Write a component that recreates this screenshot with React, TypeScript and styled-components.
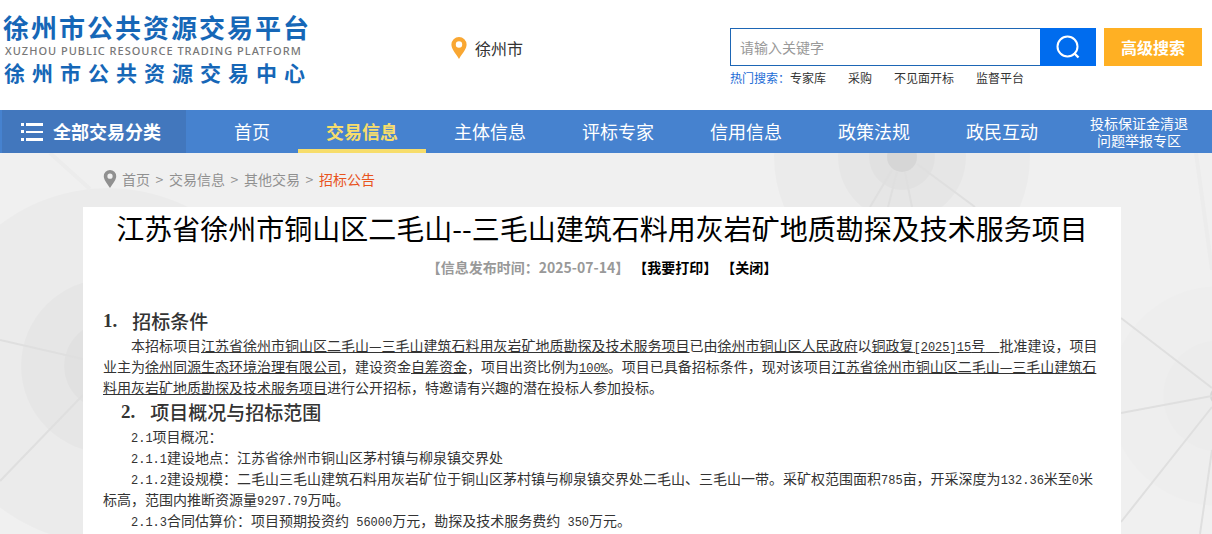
import React from "react";
import styled, { createGlobalStyle } from "styled-components";

const sans = `"Noto Sans CJK SC", "Noto Sans", sans-serif`;

const GlobalStyle = createGlobalStyle`
  * { box-sizing: border-box; }
  html, body { margin: 0; padding: 0; }
  body { background: #fff; color: #333; font-family: ${sans}; font-size: 14px; }
  a { color: inherit; text-decoration: none; }
  button { font-family: inherit; border: 0; padding: 0; cursor: pointer; }
  h1, h2, p, ul, ol { margin: 0; padding: 0; font-weight: 400; }
  ul, ol { list-style: none; }
`;

const Page = styled.div`
  display: flex;
  flex-direction: column;
  min-height: 100vh;
`;

const Header = styled.header`
  display: flex;
  flex: none;
  height: 110px;
  padding: 12px 10px 0 3px;
`;

const Logo = styled.a`
  display: block;
  width: 448px;
  color: #1667b7;
  font-weight: 700;
  white-space: nowrap;
`;

const LogoName = styled.span`
  display: block;
  font-size: 26px;
  line-height: 30px;
  letter-spacing: 2px;
`;

const LogoLatin = styled.span`
  display: block;
  padding-left: 2px;
  color: #777;
  font: 500 11px/18px "Noto Sans", sans-serif;
  letter-spacing: 1px;
`;

const LogoCentre = styled.span`
  display: block;
  padding-left: 1px;
  font-size: 21px;
  line-height: 24px;
  letter-spacing: 7px;
`;

const City = styled.div`
  display: flex;
  align-items: center;
  gap: 8px;
  height: 24px;
  margin-top: 24px;
  font-size: 16px;
`;

const SearchArea = styled.div`
  margin-left: auto;
  padding-top: 16px;
`;

const SearchForm = styled.form`
  display: flex;
  height: 38px;
`;

const SearchInput = styled.input`
  width: 310px;
  padding: 0 9px;
  border: 1px solid #1d66b5;
  border-right: 0;
  font: 14px ${sans};
  outline: 0;
  &::placeholder { color: #999; opacity: 1; }
`;

const SearchButton = styled.button`
  display: flex;
  align-items: center;
  justify-content: center;
  width: 56px;
  background: #006cee;
`;

const AdvancedButton = styled.button`
  width: 98px;
  margin-left: 8px;
  background: #ffb023;
  color: #fff;
  font-size: 16px;
  font-weight: 700;
`;

const HotWords = styled.div`
  display: flex;
  gap: 22px;
  margin-top: 3px;
  font-size: 12px;
  line-height: 18px;
`;

const HotLabel = styled.span`
  margin-right: -22px;
  width: 60px;
  color: #1c6cd6;
`;

const Nav = styled.nav`
  display: flex;
  flex: none;
  height: 43px;
  padding-left: 2px;
  background: #4682cf;
  color: #fff;
`;

const AllCategories = styled.button`
  display: flex;
  align-items: center;
  gap: 10px;
  width: 184px;
  margin-right: 20px;
  padding-left: 19px;
  background: #4277bd;
  color: #fff;
  font-size: 18px;
  font-weight: 700;
  line-height: 41px;
`;

const NavItem = styled.a<{ $active?: boolean; $short?: boolean }>`
  flex: none;
  width: ${(p) => (p.$short ? "92px" : "128px")};
  border-bottom: 4px solid ${(p) => (p.$active ? "#f7dd6b" : "transparent")};
  color: ${(p) => (p.$active ? "#f7dd6b" : "#fff")};
  font-size: 18px;
  font-weight: ${(p) => (p.$active ? 700 : 400)};
  line-height: 42px;
  text-align: center;
`;

const NavNotice = styled.a`
  flex: 1;
  padding-top: 5px;
  font-size: 14px;
  line-height: 17px;
  text-align: center;
`;

const Body = styled.div`
  position: relative;
  display: flex;
  flex: 1;
  flex-direction: column;
  padding: 0 91px 0 83px;
  background: #f0f0f0;
`;

const Network = styled.svg`
  position: absolute;
  inset: 0;
  width: 100%;
  height: 100%;
`;

const Breadcrumb = styled.ol`
  position: relative;
  display: flex;
  align-items: center;
  gap: 5px;
  height: 54px;
  padding: 0 0 2px 20px;
  color: #909090;
`;

const Separator = styled.li`
  width: 9px;
  text-align: center;
`;

const Current = styled.li`
  color: #e8541e;
`;

const Article = styled.article`
  position: relative;
  flex: 1;
  padding: 0 20px;
  background: #fff;
`;

const Title = styled.h1`
  color: #000;
  font-size: 28px;
  line-height: 42px;
  text-align: center;
  white-space: nowrap;
`;

const Meta = styled.div`
  display: flex;
  justify-content: center;
  gap: 4px;
  height: 58px;
  color: #999;
  font-size: 14px;
  font-weight: 700;
  line-height: 36px;
`;

const MetaButton = styled.button`
  height: 35px;
  background: none;
  color: #000;
  font-size: 14px;
  font-weight: 700;
`;

const SectionTitle = styled.h2<{ $inset?: boolean }>`
  display: flex;
  gap: 15px;
  padding-left: ${(p) => (p.$inset ? "18px" : "0")};
  font-size: 19px;
  font-weight: 500;
  line-height: 28px;
`;

const Mark = styled.span`
  font-family: "Liberation Serif", serif;
  font-weight: 700;
`;

const Text = styled.p`
  line-height: 21px;
  text-indent: 28px;
`;

const Num = styled.span`
  font-family: "Liberation Mono", monospace;
  font-size: 12px;
  line-height: 12px;
`;

function Pin({ color, width, height }: { color: string; width: number; height: number }) {
  return (
    <svg width={width} height={height} viewBox="0 0 16 22" aria-hidden="true">
      <path
        fill={color}
        fillRule="evenodd"
        d="M8 0a7.6 7.6 0 0 0-7.6 7.6C.4 12 4 15.500 8 22c4-6.500 7.600-10 7.600-14.400A7.600 7.600 0 0 0 8 0Zm0 4.300a3.200 3.200 0 1 1 0 6.400 3.200 3.200 0 0 1 0-6.400Z"
      />
    </svg>
  );
}

const items = ["首页", "交易信息", "主体信息", "评标专家", "信用信息", "政策法规", "政民互动"];
const hotWords = ["专家库", "采购", "不见面开标", "监督平台"];

export default function App() {
  return (
    <Page>
      <GlobalStyle />
      <Header>
        <Logo href="#">
          <LogoName>徐州市公共资源交易平台</LogoName>
          <LogoLatin>XUZHOU PUBLIC RESOURCE TRADING PLATFORM</LogoLatin>
          <LogoCentre>徐州市公共资源交易中心</LogoCentre>
        </Logo>
        <City>
          <Pin color="#f9a732" width={16} height={22} />
          徐州市
        </City>
        <SearchArea>
          <SearchForm onSubmit={(e) => e.preventDefault()}>
            <SearchInput aria-label="请输入关键字" placeholder="请输入关键字" />
            <SearchButton aria-label="搜索">
              <svg width="24" height="24" viewBox="0 0 24 24" fill="none" stroke="#fff" strokeWidth="2">
                <circle cx="11.500" cy="11.500" r="10" />
                <path d="M18 18l4.500 4.500" strokeWidth="2.400" />
              </svg>
            </SearchButton>
            <AdvancedButton type="button">高级搜索</AdvancedButton>
          </SearchForm>
          <HotWords>
            <HotLabel>热门搜索：</HotLabel>
            {hotWords.map((w) => (
              <a href="#" key={w}>{w}</a>
            ))}
          </HotWords>
        </SearchArea>
      </Header>
      <Nav>
        <AllCategories>
          <svg width="22" height="18" viewBox="0 0 22 18" fill="#fff" aria-hidden="true">
            <path d="M0 0h3v3H0zM5 0h17v3H5zM0 7h3v3H0zM5 8h17v2H5zM0 15h3v3H0zM5 15h17v3H5z" />
          </svg>
          全部交易分类
        </AllCategories>
        {items.map((t, i) => (
          <NavItem href="#" key={t} $short={i === 0} $active={i === 1}>{t}</NavItem>
        ))}
        <NavNotice href="#">
          投标保证金清退
          <br />
          问题举报专区
        </NavNotice>
      </Nav>
      <Body>
        <Network viewBox="0 0 1212 381" preserveAspectRatio="xMidYMin slice" aria-hidden="true">
          <g fill="#000" fillOpacity="0.018">
            <circle cx="902" cy="4" r="128" />
            <circle cx="902" cy="4" r="64" />
            <circle cx="902" cy="4" r="33" />
            <circle cx="108" cy="213" r="178" />
            <circle cx="108" cy="213" r="87" />
            <circle cx="108" cy="213" r="44" />
          </g>
          <g fill="#000" fillOpacity="0.007">
            <circle cx="1219" cy="243" r="110" />
            <circle cx="1219" cy="243" r="56" />
          </g>
          <circle cx="902" cy="4" r="15" fill="#d6d6d6" />
          <circle cx="1219" cy="243" r="9" fill="#d6d6d6" />
          <g stroke="#dfdfdf" strokeWidth="2">
            <path d="M892 17L870 54M897 19L888 54M905 19L912 54M917 11L975 54" />
            <path d="M1121 165L1212 235M1121 260L1212 243M1121 369L1212 254M1200 381L1212 297" />
            <path d="M0 187L83 206M83 242L0 328" />
          </g>
          <path d="M50 0L90 36M1196 0L1212 117" stroke="#ececec" strokeWidth="4" />
        </Network>
        <Breadcrumb>
          <Pin color="#909090" width={14} height={18} />
          <li><a href="#">首页</a></li>
          <Separator>&gt;</Separator>
          <li><a href="#">交易信息</a></li>
          <Separator>&gt;</Separator>
          <li><a href="#">其他交易</a></li>
          <Separator>&gt;</Separator>
          <Current>招标公告</Current>
        </Breadcrumb>
        <Article>
          <Title>江苏省徐州市铜山区二毛山--三毛山建筑石料用灰岩矿地质勘探及技术服务项目</Title>
          <Meta>
            <span>【信息发布时间：2025-07-14】</span>
            <MetaButton>【我要打印】</MetaButton>
            <MetaButton>【关闭】</MetaButton>
          </Meta>
          <SectionTitle><Mark>1.</Mark>招标条件</SectionTitle>
          <Text>
            本招标项目<u>江苏省徐州市铜山区二毛山—三毛山建筑石料用灰岩矿地质勘探及技术服务项目</u>已由<u>徐州市铜山区人民政府</u>以<u>铜政复<Num>[2025]15</Num>号<Num>&nbsp;&nbsp;</Num></u>批准建设，项目业主为<u>徐州同源生态环境治理有限公司</u>，建设资金<u>自筹资金</u>，项目出资比例为<u><Num>100%</Num></u>。项目已具备招标条件，现对该项目<u>江苏省徐州市铜山区二毛山—三毛山建筑石料用灰岩矿地质勘探及技术服务项目</u>进行公开招标，特邀请有兴趣的潜在投标人参加投标。
          </Text>
          <SectionTitle $inset><Mark>2.</Mark>项目概况与招标范围</SectionTitle>
          <Text><Num>2.1</Num>项目概况：</Text>
          <Text><Num>2.1.1</Num>建设地点：江苏省徐州市铜山区茅村镇与柳泉镇交界处</Text>
          <Text>
            <Num>2.1.2</Num>建设规模：二毛山三毛山建筑石料用灰岩矿位于铜山区茅村镇与柳泉镇交界处二毛山、三毛山一带。采矿权范围面积<Num>785</Num>亩，开采深度为<Num>132.36</Num>米至<Num>0</Num>米标高，范围内推断资源量<Num>9297.79</Num>万吨。
          </Text>
          <Text><Num>2.1.3</Num>合同估算价：项目预期投资约<Num> 56000</Num>万元，勘探及技术服务费约<Num> 350</Num>万元。</Text>
        </Article>
      </Body>
    </Page>
  );
}
